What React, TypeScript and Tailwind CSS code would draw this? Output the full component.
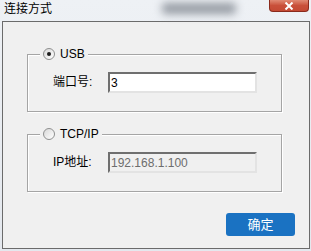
import React from 'react';

const font = { fontFamily: '"Liberation Sans", "Noto Sans CJK SC", sans-serif' };

// 单选框
const Radio: React.FC<{ checked: boolean }> = ({ checked }) => (
  <span className="flex h-[12px] w-[12px] items-center justify-center rounded-full border border-[#8e8f8f] bg-gradient-to-br from-[#d8d8d8] to-white">
    {checked && <span className="h-[4px] w-[4px] rounded-full bg-[#1c1c1c]" />}
  </span>
);

// 分组框
const GroupBox: React.FC<{
  title: string;
  checked: boolean;
  label: string;
  value: string;
  disabled?: boolean;
}> = ({ title, checked, label, value, disabled }) => (
  <div className="relative ml-[24px] h-[58px] w-[255px] border border-[#a5a5a5] shadow-[inset_1px_1px_0_#fff,1px_1px_0_#fff]">
    <span className="absolute left-[12px] top-[-8px] flex items-center gap-[4px] bg-[#f0f0f0] px-[3px] text-[12px] leading-[14px] text-black">
      <Radio checked={checked} />
      <span className="ml-[1px]">{title}</span>
    </span>
    <div className="flex items-center pl-[25px] pt-[17px]">
      <span className="w-[55px] text-[12px] leading-[21px] text-black">{label}</span>
      <div
        className={`flex h-[21px] w-[149px] items-center border-2 border-t-[#6f6f6f] border-l-[#6f6f6f] border-r-[#e3e3e3] border-b-[#e3e3e3] pl-[1px] text-[12px] ${
          disabled ? 'bg-[#f0f0f0] text-[#6d6d6d]' : 'bg-white text-black'
        }`}
      >
        {value}
      </div>
    </div>
  </div>
);

export default function App() {
  return (
    <div
      className="flex h-[251px] w-[311px] flex-col bg-gradient-to-b from-[#eef1f5] to-[#e4e8ee]"
      style={font}
    >
      {/* 标题栏 */}
      <div className="relative flex h-[21px] items-start">
        <span className="pl-[4px] pt-[2px] text-[12px] leading-[14px] text-black">连接方式</span>
        <div className="ml-[110px] mt-[3px] h-[11px] w-[74px] rounded bg-[#959ba3] blur-[4px]" />
        <div className="absolute right-[2px] top-0 flex h-[12px] w-[40px] items-center justify-center rounded-b-[4px] border border-t-0 border-[#8a2a1c] bg-gradient-to-b from-[#e08a74] via-[#c9503a] to-[#c44a34]">
          <svg width="10" height="8" viewBox="0 0 10 8">
            <path d="M1.5 0.5 L8.5 7.5 M8.5 0.5 L1.5 7.5" stroke="white" strokeWidth="2" />
          </svg>
        </div>
      </div>

      {/* 客户区 */}
      <div className="ml-[2px] flex h-[228px] w-[308px] flex-col border border-[#6b6b6b] bg-[#f0f0f0]">
        <div className="mt-[32px]">
          <GroupBox title="USB" checked label="端口号:" value="3" />
        </div>
        <div className="mt-[22px]">
          <GroupBox title="TCP/IP" checked={false} label="IP地址:" value="192.168.1.100" disabled />
        </div>
        <div className="mt-[21px] flex justify-end pr-[14px]">
          <button className="flex h-[23px] w-[69px] items-center justify-center rounded-[3px] bg-[#1a72c2] text-[13px] text-white">
            确定
          </button>
        </div>
      </div>
    </div>
  );
}
